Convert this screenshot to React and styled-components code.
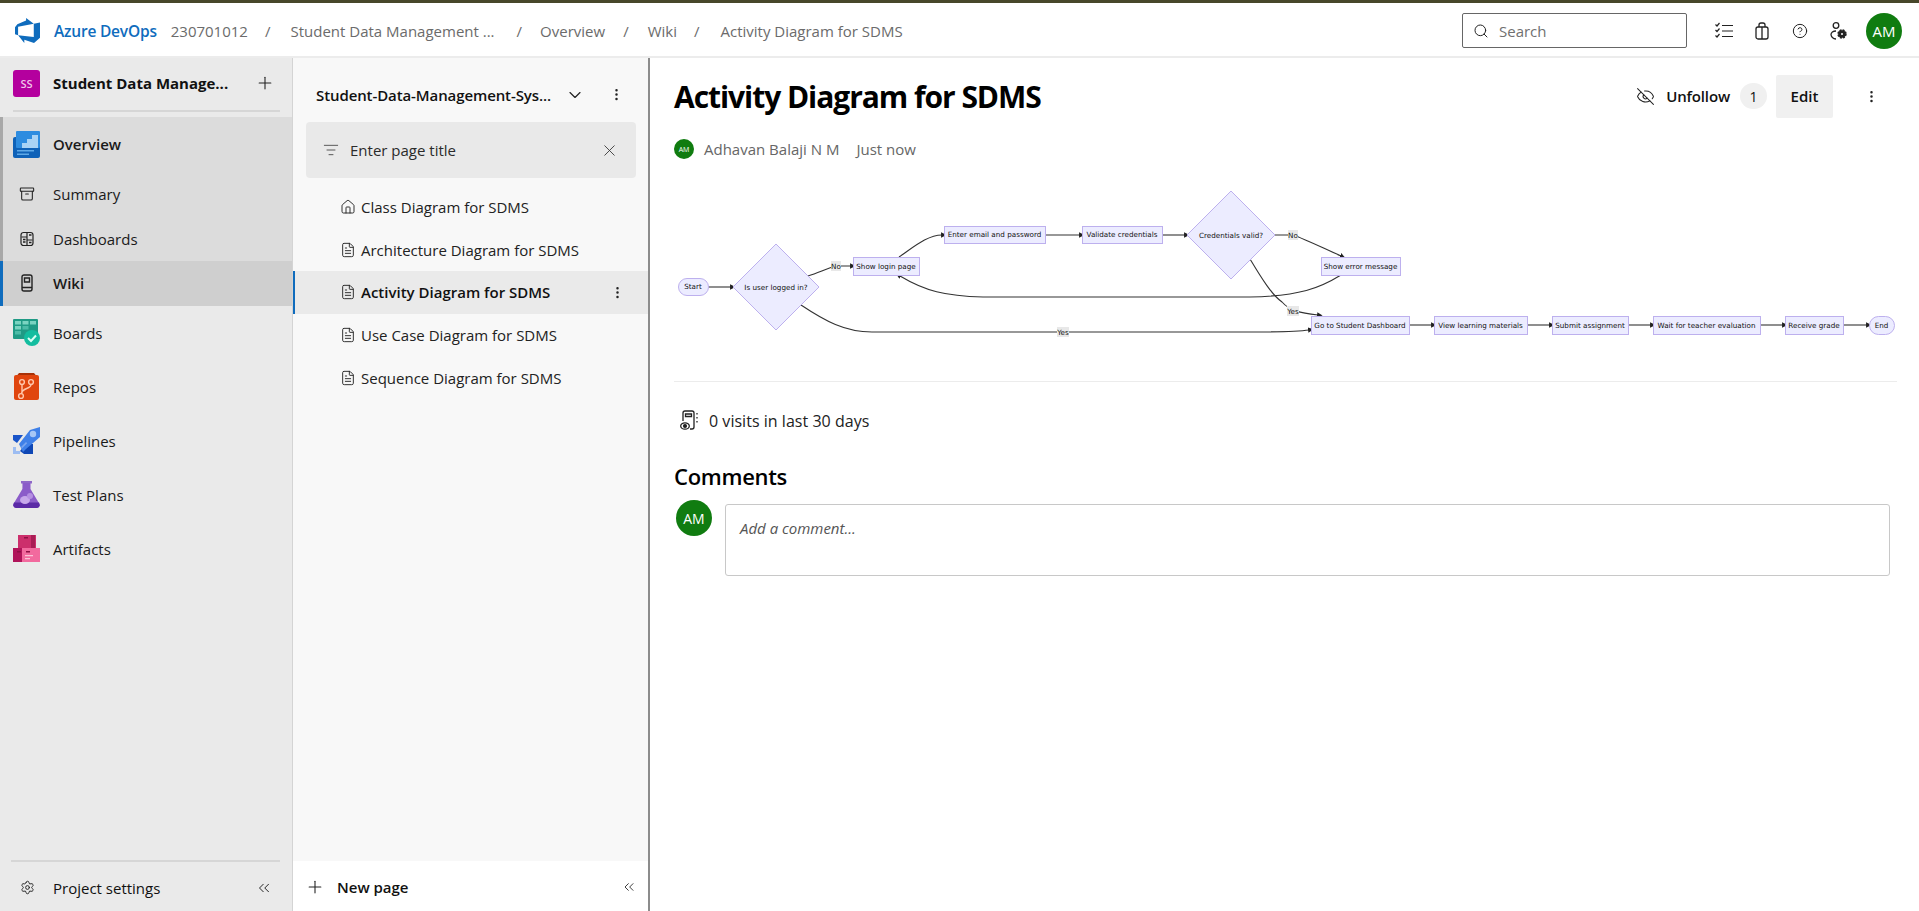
import React from 'react'
import styled, { createGlobalStyle } from 'styled-components'
import {
  Search, CircleHelp, Plus, ChevronDown, EllipsisVertical,
  ListFilter, X, House, FileText, EyeOff, ChevronsLeft, Settings, Archive,
} from 'lucide-react'

const GlobalStyle = createGlobalStyle`
  html, body { margin: 0; padding: 0; height: 911px; overflow: hidden; background: #fff; }
  body { font-family: "Open Sans", "Noto Sans", "Liberation Sans", sans-serif; color: #111; }
  * { box-sizing: border-box; }
`

const Page = styled.div`
  display: flex;
  flex-direction: column;
  height: 911px;
  border-top: 3px solid #47472a;
`

const Header = styled.header`
  display: flex;
  align-items: center;
  height: 55px;
  flex: none;
  padding: 2px 17px 0 15px;
  border-bottom: 2px solid #ececec;
`

const Brand = styled.span`
  margin-left: 14px;
  font-size: 15.5px;
  font-weight: 600;
  letter-spacing: -0.2px;
  color: #0f6cbd;
`

const Crumb = styled.span`
  margin-left: ${({ $gap }) => $gap}px;
  font-size: 15px;
  white-space: nowrap;
  color: #6b6b6b;
`

const HeaderRight = styled.div`
  display: flex;
  align-items: center;
  margin-left: auto;
`

const SearchBox = styled.div`
  display: flex;
  align-items: center;
  gap: 10px;
  width: 225px;
  height: 35px;
  padding-left: 10px;
  border: 1px solid #666;
  border-radius: 2px;
  font-size: 15px;
  color: #707070;
`

const HeaderIcon = styled.span`
  display: flex;
  justify-content: center;
  width: 38px;
  &:first-of-type { margin-left: 18px; }
`

const Avatar = styled.span`
  display: flex;
  flex: none;
  align-items: center;
  justify-content: center;
  width: ${({ $size }) => $size}px;
  height: ${({ $size }) => $size}px;
  margin-left: ${({ $gap }) => $gap || 0}px;
  border-radius: 50%;
  background: #107c10;
  color: #fff;
  font-size: ${({ $font }) => $font}px;
`

const Body = styled.div`
  display: flex;
  flex: 1;
  min-height: 0;
`

const Sidebar = styled.nav`
  display: flex;
  flex-direction: column;
  flex: none;
  width: 293px;
  background: #eaeaea;
  border-right: 1px solid #d4d4d4;
`

const ProjectRow = styled.div`
  display: flex;
  align-items: center;
  height: 54px;
  margin: 0 12px 5px 13px;
  padding-bottom: 2px;
  border-bottom: 2px solid #d6d6d6;
`

const ProjectBadge = styled.span`
  display: flex;
  align-items: center;
  justify-content: center;
  width: 27px;
  height: 27px;
  border-radius: 3px;
  background: #b4009e;
  color: #f0c6ea;
  font-size: 11px;
  font-weight: 600;
`

const ProjectName = styled.span`
  margin-left: 13px;
  font-size: 15px;
  font-weight: 700;
  color: #111;
`

const ProjectAdd = styled.span`
  display: flex;
  margin-left: auto;
  margin-right: 5px;
`

const NavItem = styled.div`
  display: flex;
  align-items: center;
  flex: none;
  height: ${({ $h }) => $h}px;
  padding: 0 0 1px 13px;
  gap: 13px;
  background: ${({ $bg }) => $bg || 'transparent'};
  border-left: 3px solid ${({ $strip }) => $strip || 'transparent'};
  font-size: 15px;
  color: #1a1a1a;
  font-weight: ${({ $bold }) => ($bold ? 600 : 400)};
`

const NavIconSlot = styled.span`
  display: flex;
  justify-content: center;
  flex: none;
  width: 27px;
  margin-left: -3px;
`

const SidebarFoot = styled.div`
  display: flex;
  align-items: center;
  margin: auto 12px 0 11px;
  height: 51px;
  border-top: 2px solid #d6d6d6;
  padding: 2px 7px 0 9px;
  font-size: 15px;
  gap: 18px;
  & > svg:last-child { margin-left: auto; }
`

const Tree = styled.aside`
  display: flex;
  flex-direction: column;
  flex: none;
  width: 357px;
  background: #f8f8f8;
  border-right: 2px solid #8c8c8c;
`

const TreeHead = styled.div`
  display: flex;
  align-items: center;
  height: 64px;
  padding: 9px 23px 0 23px;
  font-size: 15px;
  font-weight: 600;
  letter-spacing: -0.1px;
  color: #111;
`

const TreeTitle = styled.span`
  width: 249px;
  white-space: nowrap;
`

const TreeKebab = styled.span`
  display: flex;
  margin-left: 24px;
`

const FilterBox = styled.div`
  display: flex;
  align-items: center;
  height: 56px;
  margin: 0 12px 8px 13px;
  padding: 0 17px 0 17px;
  background: #e9e9e9;
  border-radius: 4px;
  font-size: 15px;
  color: #2b2b2b;
  gap: 11px;
  & > svg:last-child { margin-left: auto; }
`

const TreeRow = styled.div`
  display: flex;
  align-items: center;
  height: 42.6px;
  padding-left: 45px;
  padding-right: 23px;
  gap: 5px;
  font-size: 15px;
  font-weight: ${({ $active }) => ($active ? 600 : 400)};
  color: ${({ $active }) => ($active ? '#111' : '#222')};
  background: ${({ $active }) => ($active ? '#eaeaea' : 'transparent')};
  border-left: 2px solid ${({ $active }) => ($active ? '#0f6cbd' : 'transparent')};
`

const RowMenu = styled.span`
  display: flex;
  margin-left: auto;
`

const NewPage = styled.div`
  display: flex;
  align-items: center;
  margin-top: auto;
  height: 50px;
  padding: 2px 11px 0 12px;
  background: #fff;
  font-size: 15px;
  font-weight: 600;
  gap: 12px;
  & > svg:last-child { margin-left: auto; }
`

const Main = styled.main`
  flex: 1;
  min-width: 0;
  padding: 0 22px 0 24px;
`

const TitleRow = styled.div`
  display: flex;
  align-items: center;
  height: 60px;
  margin-top: 8px;
`

const Title = styled.h1`
  margin: 0;
  font-size: 30px;
  font-weight: 700;
  letter-spacing: -1.05px;
  color: #000;
`

const Actions = styled.div`
  display: flex;
  align-items: center;
  margin-left: auto;
  margin-right: 18px;
  font-size: 15px;
  font-weight: 600;
  color: #111;
`

const UnfollowText = styled.span`
  margin-left: 11px;
  letter-spacing: -0.15px;
`

const CountBadge = styled.span`
  display: flex;
  align-items: center;
  justify-content: center;
  width: 27px;
  height: 26px;
  margin-left: 10px;
  border-radius: 13px;
  background: #f0f0f0;
  font-weight: 400;
  font-size: 14px;
`

const EditButton = styled.span`
  display: flex;
  align-items: center;
  justify-content: center;
  width: 57px;
  height: 43px;
  margin: 0 31px 0 9px;
  border-radius: 2px;
  background: #f0f0f0;
`

const Meta = styled.div`
  display: flex;
  align-items: center;
  height: 20px;
  margin-top: 13px;
  font-size: 15px;
  color: #666;
`

const MetaAuthor = styled.span`
  margin-left: 10px;
`

const MetaTime = styled.span`
  margin-left: 17px;
`

const DiagramSvg = styled.svg`
  display: block;
  margin-top: 27px;
  width: 1223px;
  height: 192px;
`

const Divider = styled.hr`
  margin: 3px 0 0;
  border: none;
  border-top: 1px solid #ececec;
`

const Visits = styled.div`
  display: flex;
  align-items: center;
  gap: 9px;
  height: 24px;
  margin-top: 27px;
  margin-left: 6px;
  font-size: 16px;
  letter-spacing: 0.03px;
  color: #222;
`

const CommentsHeading = styled.h2`
  margin: 26px 0 0;
  height: 34px;
  line-height: 34px;
  font-size: 22px;
  font-weight: 600;
  letter-spacing: -0.3px;
  color: #000;
`

const CommentRow = styled.div`
  display: flex;
  align-items: flex-start;
  margin-top: 7px;
  padding-left: 2px;
  gap: 13px;
`

const CommentBox = styled.div`
  flex: 1;
  height: 72px;
  margin-top: 4px;
  margin-right: 7px;
  padding: 13px 14px;
  border: 1px solid #c8c8c8;
  border-radius: 3px;
  font-size: 15px;
  font-style: italic;
  color: #555;
`

const NodeLabel = styled.text`
  font-family: "DejaVu Sans", sans-serif;
  font-size: 7.2px;
  fill: #111;
  text-anchor: middle;
  dominant-baseline: central;
`

const OverviewIcon = () => (
  <svg width="27" height="27" viewBox="0 0 27 27">
    <rect x="0" y="6" width="27" height="21" rx="2" fill="#0f62b8" />
    <rect x="3" y="0" width="24" height="17" rx="1" fill="#2d8ce0" />
    <path d="M9 17V12h5V8h5V4h6v13z" fill="#a9d3f5" />
    <path d="M4 19h17v1.5H4zM4 22.5h12V24H4z" fill="#5ea9e8" />
  </svg>
)

const SummaryIcon = () => <Archive size={16} strokeWidth={1.6} color="#222" />

const DashboardsIcon = () => (
  <svg width="16" height="16" viewBox="0 0 16 16" fill="none" stroke="#222" strokeWidth="1.2">
    <rect x="2" y="1.5" width="12" height="13" rx="2.5" />
    <path d="M8 2v12M2.5 6h5M8.5 9h5" />
    <path d="M4 8.5h2.5M4 11h2.5M10 4h2.5M10 11.5h2.5" strokeWidth="1.6" />
  </svg>
)

const WikiIcon = () => (
  <svg width="16" height="18" viewBox="0 0 16 18" fill="none" stroke="#222" strokeWidth="1.4">
    <rect x="3" y="1" width="10" height="16" rx="2" />
    <path d="M5.5 4h5v4h-5zM3 13.5h10" />
  </svg>
)

const BoardsIcon = () => (
  <svg width="27" height="27" viewBox="0 0 27 27">
    <rect x="0" y="0" width="25" height="20" rx="1" fill="#1f9a85" />
    <path d="M2 2h6v3.5H2zM9.5 2h6v3.5h-6zM17 2h6v3.5h-6zM2 7h6v3.5H2z" fill="#7ad3c1" />
    <path d="M9.5 7h6v3.5h-6zM2 12h6v3.5H2z" fill="#4cbba7" />
    <circle cx="19" cy="19" r="8" fill="#13bd9f" />
    <path d="M15 19l3 3 5-5.5" fill="none" stroke="#d8fff4" strokeWidth="2" />
  </svg>
)

const ReposIcon = () => (
  <svg width="27" height="27" viewBox="0 0 27 27">
    <path d="M4 2.5 6 0h15l2 2.5z" fill="#a93208" />
    <rect x="1" y="2" width="25" height="25" rx="2" fill="#e0450e" />
    <g fill="none" stroke="#ffc7ac" strokeWidth="1.4">
      <circle cx="9" cy="9" r="2.4" />
      <circle cx="18" cy="9" r="2.4" />
      <circle cx="8" cy="23" r="2.4" />
      <path d="M9 11.5v9M18 11.5c0 5-9 3-9.5 9" />
    </g>
  </svg>
)

const PipelinesIcon = () => (
  <svg width="27" height="27" viewBox="0 0 27 27">
    <path d="M0 8h10L4 16 0 13z" fill="#1a55c9" />
    <path d="M13 17h7v10h-9l-4-3z" fill="#0f47b5" />
    <path d="M6 17 17 3l10-3v10L13 22l-3 3z" fill="#3f80e8" />
    <circle cx="20" cy="7" r="3.2" fill="#a6c6f5" />
    <path d="M8 20l5-5 1.2 1.2-5 5z" fill="#79a5ef" />
    <path d="M0 27v-7h3v4h4v3z" fill="#9dbdf2" />
  </svg>
)

const TestPlansIcon = () => (
  <svg width="27" height="27" viewBox="0 0 27 27">
    <rect x="8" y="0" width="11" height="2.5" fill="#8f68c8" />
    <path d="M9.5 2h8v6l9 15a3 3 0 0 1-2.6 4H3a3 3 0 0 1-2.6-4l9-15z" fill="#8b5cc9" />
    <path d="M1 21.5h25l.6 2a3 3 0 0 1-2.6 3.5H3a3 3 0 0 1-2.6-3.5z" fill="#5b2aa6" />
    <ellipse cx="12" cy="19" rx="5" ry="4" fill="#c7a8ea" />
    <circle cx="17" cy="15" r="3" fill="#b590e2" />
  </svg>
)

const ArtifactsIcon = () => (
  <svg width="27" height="27" viewBox="0 0 27 27">
    <rect x="5" y="0" width="18" height="14" fill="#cc2f6c" />
    <rect x="18" y="0" width="4" height="14" fill="#a81e55" />
    <rect x="0" y="13" width="14" height="14" fill="#b0145a" />
    <rect x="9" y="13" width="18" height="14" fill="#f26a9e" />
    <path d="M11 2h4v1.4h-4zM4 16h4v1.4H4zM13 16h4v1.4h-4z" fill="#8d1144" />
    <path d="M12 20h8v1.2h-8zM12 23h5v1.2h-5z" fill="#fbc2d7" />
  </svg>
)

const Logo = () => (
  <svg width="25" height="25" viewBox="0 0 24 24" fill="#0f6cbd">
    <path d="M0 8.877L2.247 5.91l8.405-3.416V.022l7.37 5.393L2.966 8.338v8.225L0 15.707zm24-4.45v14.651l-5.753 4.9-9.303-3.057v3.056l-5.978-7.416 15.057 1.798V5.415z" />
  </svg>
)

const TasksIcon = () => (
  <svg width="20" height="20" viewBox="0 0 20 20" fill="none" stroke="#222" strokeWidth="1.2">
    <path d="M8 4.5h11M8 10h11M8 15.5h11" />
    <path d="M1.5 3.5l1.5 1.5 2.5-3M1.5 9l1.5 1.5 2.5-3M1.5 14.5l1.5 1.5 2.5-3" />
  </svg>
)

const BagIcon = () => (
  <svg width="14" height="18" viewBox="0 0 14 18" fill="none" stroke="#222" strokeWidth="1.3">
    <rect x="1" y="5" width="12" height="12" rx="2" />
    <path d="M4 5V3a2 2 0 0 1 2-2h2a2 2 0 0 1 2 2v2M7 5v12" />
  </svg>
)

const AccountIcon = () => (
  <svg width="19" height="20" viewBox="0 0 19 20" fill="none" stroke="#222" strokeWidth="1.3">
    <circle cx="7" cy="4.5" r="2.8" />
    <path d="M7 10c-3 0-5 1.6-5 3.6S4 18 7 18" />
    <circle cx="13" cy="13" r="3.8" fill="#222" strokeWidth="1.8" strokeDasharray="2 1" />
    <circle cx="13" cy="13" r="1" fill="#fff" stroke="none" />
  </svg>
)

const VisitsIcon = () => (
  <svg width="20" height="22" viewBox="0 0 20 22" fill="none" stroke="#222" strokeWidth="1.3">
    <path d="M3 11V3a2 2 0 0 1 2-2h7a2 2 0 0 1 2 2v14a2 2 0 0 1-2 2h-2" />
    <path d="M5.5 4h6v2.5h-6zM17 3v1.5M17 7v1.5M17 11v1.5" />
    <ellipse cx="5" cy="16" rx="4.3" ry="3.2" />
    <circle cx="5" cy="16" r="1.4" fill="#222" />
  </svg>
)

const NODES = [
  { kind: 'pill', x: 678, y: 279, w: 30, h: 17, label: 'Start' },
  { kind: 'diamond', cx: 776, cy: 288, rx: 43, ry: 43, label: 'Is user logged in?' },
  { kind: 'box', x: 853, y: 258, w: 66, h: 18, label: 'Show login page' },
  { kind: 'box', x: 944, y: 227, w: 101, h: 17, label: 'Enter email and password' },
  { kind: 'box', x: 1082, y: 227, w: 80, h: 17, label: 'Validate credentials' },
  { kind: 'diamond', cx: 1231, cy: 236, rx: 44, ry: 44, label: 'Credentials valid?' },
  { kind: 'box', x: 1321, y: 258, w: 79, h: 18, label: 'Show error message' },
  { kind: 'box', x: 1311, y: 317, w: 98, h: 18, label: 'Go to Student Dashboard' },
  { kind: 'box', x: 1434, y: 317, w: 93, h: 18, label: 'View learning materials' },
  { kind: 'box', x: 1552, y: 317, w: 76, h: 18, label: 'Submit assignment' },
  { kind: 'box', x: 1653, y: 317, w: 107, h: 18, label: 'Wait for teacher evaluation' },
  { kind: 'box', x: 1785, y: 317, w: 58, h: 18, label: 'Receive grade' },
  { kind: 'pill', x: 1869, y: 317, w: 25, h: 18, label: 'End' },
]

const EDGES = [
  'M708 288H731',
  'M808 277C820 273 828 269 836 267H851',
  'M899 258C915 247 928 236 942 236',
  'M1045 236H1080',
  'M1162 236H1185',
  'M1275 236H1293C1305 240 1325 250 1341 257',
  'M1341 276C1320 289 1300 297 1250 298H983C945 297 925 292 900 277',
  'M801 306C825 322 845 333 872 333H1250C1280 333 1295 333 1309 331',
  'M1250 260C1262 280 1272 296 1282 303C1290 312 1300 314 1318 316',
  'M1409 326H1432',
  'M1527 326H1550',
  'M1628 326H1651',
  'M1760 326H1783',
  'M1843 326H1867',
]

const EDGE_LABELS = [
  { x: 836, y: 267, w: 10, label: 'No' },
  { x: 1063, y: 333, w: 12, label: 'Yes' },
  { x: 1293, y: 236, w: 10, label: 'No' },
  { x: 1293, y: 312, w: 12, label: 'Yes' },
]

const DiagramNode = ({ node }) => {
  const stroke = { fill: '#ececff', stroke: '#bdb0ee', strokeWidth: 1 }
  if (node.kind === 'diamond') {
    const { cx, cy, rx, ry } = node
    return (
      <g>
        <polygon {...stroke} points={`${cx},${cy - ry} ${cx + rx},${cy} ${cx},${cy + ry} ${cx - rx},${cy}`} />
        <NodeLabel x={cx} y={cy}>{node.label}</NodeLabel>
      </g>
    )
  }
  const r = node.kind === 'pill' ? node.h / 2 : 0
  return (
    <g>
      <rect {...stroke} x={node.x + 0.5} y={node.y + 0.5} width={node.w} height={node.h} rx={r} />
      <NodeLabel x={node.x + node.w / 2} y={node.y + node.h / 2}>{node.label}</NodeLabel>
    </g>
  )
}

const Diagram = () => (
  <DiagramSvg viewBox="674 187 1223 192">
    <defs>
      <marker id="arrow" viewBox="0 0 6 6" refX="1" refY="3" markerWidth="5" markerHeight="5" orient="auto">
        <path d="M0 0 6 3 0 6z" fill="#222" />
      </marker>
    </defs>
    {EDGES.map((d) => (
      <path key={d} d={d} fill="none" stroke="#333" strokeWidth="1.1" markerEnd="url(#arrow)" />
    ))}
    {NODES.map((n) => <DiagramNode key={n.label} node={n} />)}
    {EDGE_LABELS.map((l) => (
      <g key={`${l.label}${l.x}`}>
        <rect x={l.x - l.w / 2} y={l.y - 5} width={l.w} height={10} fill="#e8e8e8" />
        <NodeLabel x={l.x} y={l.y}>{l.label}</NodeLabel>
      </g>
    ))}
  </DiagramSvg>
)

const NAV = [
  { label: 'Overview', h: 55, icon: <OverviewIcon />, bg: '#dcdcdc', strip: '#a8a8a8', bold: true },
  { label: 'Summary', h: 45, icon: <SummaryIcon />, bg: '#dcdcdc', strip: '#a8a8a8' },
  { label: 'Dashboards', h: 44, icon: <DashboardsIcon />, bg: '#dcdcdc', strip: '#a8a8a8' },
  { label: 'Wiki', h: 45, icon: <WikiIcon />, bg: '#cfcfcf', strip: '#0f6cbd', bold: true },
  { label: 'Boards', h: 54, icon: <BoardsIcon /> },
  { label: 'Repos', h: 54, icon: <ReposIcon /> },
  { label: 'Pipelines', h: 54, icon: <PipelinesIcon /> },
  { label: 'Test Plans', h: 54, icon: <TestPlansIcon /> },
  { label: 'Artifacts', h: 54, icon: <ArtifactsIcon /> },
]

const PAGES = [
  { label: 'Class Diagram for SDMS', home: true },
  { label: 'Architecture Diagram for SDMS' },
  { label: 'Activity Diagram for SDMS', active: true },
  { label: 'Use Case Diagram for SDMS' },
  { label: 'Sequence Diagram for SDMS' },
]

const App = () => (
  <Page>
    <GlobalStyle />
    <Header>
      <Logo />
      <Brand>Azure DevOps</Brand>
      <Crumb $gap={14}>230701012</Crumb>
      <Crumb $gap={17}>/</Crumb>
      <Crumb $gap={20}>Student Data Management ...</Crumb>
      <Crumb $gap={22}>/</Crumb>
      <Crumb $gap={18}>Overview</Crumb>
      <Crumb $gap={18}>/</Crumb>
      <Crumb $gap={19}>Wiki</Crumb>
      <Crumb $gap={17}>/</Crumb>
      <Crumb $gap={21}>Activity Diagram for SDMS</Crumb>
      <HeaderRight>
        <SearchBox><Search size={16} color="#222" strokeWidth={1.5} />Search</SearchBox>
        <HeaderIcon><TasksIcon /></HeaderIcon>
        <HeaderIcon><BagIcon /></HeaderIcon>
        <HeaderIcon><CircleHelp size={16} strokeWidth={1.5} color="#222" /></HeaderIcon>
        <HeaderIcon><AccountIcon /></HeaderIcon>
        <Avatar $size={36} $font={15} $gap={9}>AM</Avatar>
      </HeaderRight>
    </Header>
    <Body>
      <Sidebar>
        <ProjectRow>
          <ProjectBadge>SS</ProjectBadge>
          <ProjectName>Student Data Manage...</ProjectName>
          <ProjectAdd><Plus size={20} strokeWidth={1.3} color="#222" /></ProjectAdd>
        </ProjectRow>
        {NAV.map((item) => (
          <NavItem key={item.label} $h={item.h} $bg={item.bg} $strip={item.strip} $bold={item.bold}>
            <NavIconSlot>{item.icon}</NavIconSlot>
            {item.label}
          </NavItem>
        ))}
        <SidebarFoot>
          <Settings size={15} strokeWidth={1.5} color="#222" />
          Project settings
          <ChevronsLeft size={18} strokeWidth={1.3} color="#222" />
        </SidebarFoot>
      </Sidebar>
      <Tree>
        <TreeHead>
          <TreeTitle>Student-Data-Management-Sys...</TreeTitle>
          <ChevronDown size={20} strokeWidth={1.4} color="#222" />
          <TreeKebab><EllipsisVertical size={15} color="#222" /></TreeKebab>
        </TreeHead>
        <FilterBox>
          <ListFilter size={16} strokeWidth={1.2} color="#333" />
          Enter page title
          <X size={19} strokeWidth={1.1} color="#333" />
        </FilterBox>
        {PAGES.map((page) => (
          <TreeRow key={page.label} $active={page.active}>
            {page.home
              ? <House size={16} strokeWidth={1.4} color="#222" />
              : <FileText size={16} strokeWidth={1.4} color="#222" />}
            {page.label}
            {page.active && <RowMenu><EllipsisVertical size={15} color="#222" /></RowMenu>}
          </TreeRow>
        ))}
        <NewPage>
          <Plus size={20} strokeWidth={1.3} color="#222" />
          New page
          <ChevronsLeft size={16} strokeWidth={1.3} color="#222" />
        </NewPage>
      </Tree>
      <Main>
        <TitleRow>
          <Title>Activity Diagram for SDMS</Title>
          <Actions>
            <EyeOff size={19} strokeWidth={1.3} color="#222" />
            <UnfollowText>Unfollow</UnfollowText>
            <CountBadge>1</CountBadge>
            <EditButton>Edit</EditButton>
            <EllipsisVertical size={15} color="#222" />
          </Actions>
        </TitleRow>
        <Meta>
          <Avatar $size={20} $font={7}>AM</Avatar>
          <MetaAuthor>Adhavan Balaji N M</MetaAuthor>
          <MetaTime>Just now</MetaTime>
        </Meta>
        <Diagram />
        <Divider />
        <Visits><VisitsIcon />0 visits in last 30 days</Visits>
        <CommentsHeading>Comments</CommentsHeading>
        <CommentRow>
          <Avatar $size={36} $font={14}>AM</Avatar>
          <CommentBox>Add a comment...</CommentBox>
        </CommentRow>
      </Main>
    </Body>
  </Page>
)

export default App
